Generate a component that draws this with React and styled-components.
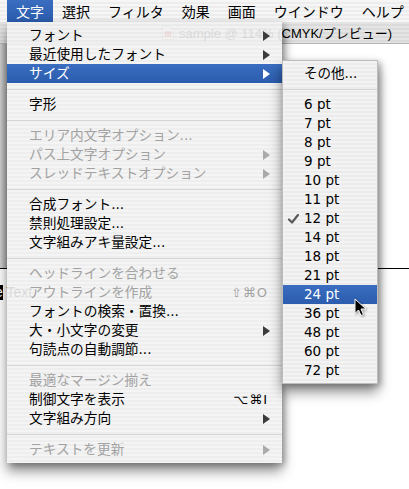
import React from 'react';
import styled, { createGlobalStyle } from 'styled-components';

const BLUE = 'linear-gradient(to bottom, #3b6dc0 0%, #3265b6 50%, #2c5cad 100%)';
const UI_FONT = '"DejaVu Sans", "Noto Sans CJK JP", sans-serif';
const JP_FONT = '"Noto Sans CJK JP", "DejaVu Sans", sans-serif';

const Global = createGlobalStyle`
  html, body { margin: 0; padding: 0; }
  body {
    width: 409px; height: 489px; overflow: hidden; background: #fff;
    font-family: ${UI_FONT};
  }
`;

const Screen = styled.div`
  position: relative;
  width: 409px;
  height: 489px;
  overflow: hidden;
  display: flex;
  flex-direction: column;
  background: #fff;
`;

const MenuBar = styled.div`
  flex: none;
  height: 22px;
  display: flex;
  padding-left: 7px;
  background: repeating-linear-gradient(to bottom, #f6f6f6 0 2px, #ededed 2px 4px);
  font-family: ${JP_FONT};
  font-size: 14px;
`;

const BarItem = styled.div`
  height: 22px;
  line-height: 22px;
  padding: 0 9px;
  white-space: nowrap;
  color: ${p => (p.$active ? '#fff' : '#000')};
  background: ${p => (p.$active ? BLUE : 'transparent')};
`;

const TitleBar = styled.div`
  flex: none;
  height: 21px;
  display: flex;
  align-items: center;
  gap: 5px;
  padding-left: 162px;
  background: repeating-linear-gradient(to bottom, #e4e4e4 0 2px, #dadada 2px 4px);
  border-bottom: 1px solid #b4b4b4;
  font-family: "Liberation Sans", "Noto Sans CJK JP", sans-serif;
  font-size: 13px;
  color: #000;
  white-space: nowrap;
`;

const Content = styled.div`
  flex: 1;
  display: flex;
  flex-direction: column;
`;

const Upper = styled.div`
  flex: none;
  height: 224px;
  display: flex;
`;

const Strip = styled.div`
  width: 7px;
  background: linear-gradient(to right, #d2d2d2, #a9a9a9);
`;

const Fill = styled.div`
  flex: 1;
  background: #fff;
`;

const Rule = styled.div`
  flex: none;
  height: 1px;
  display: flex;
`;

const RuleSeg = styled.div`
  width: ${p => p.$w}px;
  background: #000;
`;

const Spacer = styled.div`
  flex: 1;
`;

const Lower = styled.div`
  flex: 1;
  padding-top: 16px;
`;

const TextLine = styled.div`
  margin-left: -5px;
  height: 14px;
  line-height: 14px;
  font-family: "Liberation Sans", sans-serif;
  font-size: 14px;
  color: #000;
  white-space: nowrap;
`;

const Selected = styled.span`
  background: #000;
  color: #fff;
  display: inline-block;
  height: 15px;
`;

const Menu = styled.div`
  position: absolute;
  top: 22px;
  left: 7px;
  width: 275px;
  padding: 4px 0;
  z-index: 2;
  background: repeating-linear-gradient(
    to bottom,
    rgba(243, 243, 243, 0.9) 0 2px,
    rgba(236, 236, 236, 0.9) 2px 4px
  );
  box-shadow: 0 8px 12px rgba(0, 0, 0, 0.45), 3px 2px 6px rgba(0, 0, 0, 0.25);
`;

const SubMenu = styled.div`
  position: absolute;
  top: 60px;
  left: 282px;
  width: 94px;
  padding: 3px 0;
  z-index: 3;
  border: 1px solid #bcbcbc;
  background: repeating-linear-gradient(to bottom, #f3f3f3 0 2px, #ececec 2px 4px);
  box-shadow: 0 8px 12px rgba(0, 0, 0, 0.45), 3px 2px 6px rgba(0, 0, 0, 0.25);
`;

const Item = styled.div`
  height: 19px;
  display: flex;
  align-items: center;
  padding: ${p => (p.$sub ? '0 8px 0 5px' : '0 12px 0 22px')};
  font-size: ${p => (p.$sub ? '13.5px' : '13.7px')};
  color: ${p => (p.$disabled ? '#a2a2a2' : p.$active ? '#fff' : '#000')};
  background: ${p => (p.$active ? BLUE : 'transparent')};
`;

const Label = styled.span`
  flex: 1;
  line-height: 19px;
  white-space: nowrap;
`;

const CheckCol = styled.span`
  width: 16px;
  height: 19px;
  display: flex;
  align-items: center;
`;

const Shortcut = styled.span`
  margin-right: 2px;
  font-family: "DejaVu Sans", sans-serif;
  font-size: 13px;
  letter-spacing: 1px;
  line-height: 19px;
`;

const Arrow = styled.span`
  width: 0;
  height: 0;
  border-left: 7px solid ${p => (p.$disabled ? '#aaaaaa' : p.$active ? '#ffffff' : '#3c3c3c')};
  border-top: 5px solid transparent;
  border-bottom: 5px solid transparent;
`;

const Separator = styled.div`
  height: 12px;
  display: flex;
  align-items: center;
  &::after {
    content: '';
    flex: 1;
    height: 1px;
    background: #d6d6d6;
  }
`;

const Cursor = styled.svg`
  position: absolute;
  left: 354px;
  top: 298px;
  z-index: 5;
  filter: drop-shadow(1px 1px 1px rgba(0, 0, 0, 0.35));
`;

const mainItems = [
  { l: 'フォント', arrow: true },
  { l: '最近使用したフォント', arrow: true },
  { l: 'サイズ', arrow: true, active: true },
  'sep',
  { l: '字形' },
  'sep',
  { l: 'エリア内文字オプション...', dis: true },
  { l: 'パス上文字オプション', dis: true, arrow: true },
  { l: 'スレッドテキストオプション', dis: true, arrow: true },
  'sep',
  { l: '合成フォント...' },
  { l: '禁則処理設定...' },
  { l: '文字組みアキ量設定...' },
  'sep',
  { l: 'ヘッドラインを合わせる', dis: true },
  { l: 'アウトラインを作成', dis: true, sc: '⇧⌘O' },
  { l: 'フォントの検索・置換...' },
  { l: '大・小文字の変更', arrow: true },
  { l: '句読点の自動調節...' },
  'sep',
  { l: '最適なマージン揃え', dis: true },
  { l: '制御文字を表示', sc: '⌥⌘I' },
  { l: '文字組み方向', arrow: true },
  'sep',
  { l: 'テキストを更新', dis: true, arrow: true },
];

const sizes = ['6', '7', '8', '9', '10', '11', '12', '14', '18', '21', '24', '36', '48', '60', '72'];

const barItems = ['文字', '選択', 'フィルタ', '効果', '画面', 'ウインドウ', 'ヘルプ'];

function DocIcon() {
  return (
    <svg width="12" height="14" viewBox="0 0 12 14">
      <path d="M0.5 0.5 H8 L11.5 4 V13.5 H0.5 Z" fill="#fff" stroke="#999" />
      <rect x="2.5" y="5" width="7" height="6" fill="#d24040" />
    </svg>
  );
}

function Check() {
  return (
    <svg width="11" height="10" viewBox="0 0 11 10">
      <path d="M1 5.5 L4 8.5 L10 1" fill="none" stroke="#5a5a5a" strokeWidth="2.2" strokeLinecap="round" strokeLinejoin="round" />
    </svg>
  );
}

export default function App() {
  return (
    <>
      <Global />
      <Screen>
        <MenuBar>
          {barItems.map((b, i) => (
            <BarItem key={b} $active={i === 0}>{b}</BarItem>
          ))}
        </MenuBar>
        <TitleBar>
          <DocIcon />
          <span>sample @ 114% (CMYK/プレビュー)</span>
        </TitleBar>
        <Content>
          <Upper>
            <Strip />
            <Fill />
          </Upper>
          <Rule>
            <RuleSeg $w={7} />
            <Spacer />
            <RuleSeg $w={31} />
          </Rule>
          <Lower>
            <TextLine>
              <Selected>e</Selected>{'  '}Text
            </TextLine>
          </Lower>
        </Content>

        <Menu>
          {mainItems.map((it, i) =>
            it === 'sep' ? (
              <Separator key={i} />
            ) : (
              <Item key={i} $disabled={it.dis} $active={it.active}>
                <Label>{it.l}</Label>
                {it.sc && <Shortcut>{it.sc}</Shortcut>}
                {it.arrow && <Arrow $disabled={it.dis} $active={it.active} />}
              </Item>
            )
          )}
        </Menu>

        <SubMenu>
          <Item $sub>
            <CheckCol />
            <Label>その他...</Label>
          </Item>
          <Separator />
          {sizes.map(s => (
            <Item key={s} $sub $active={s === '24'}>
              <CheckCol>{s === '12' && <Check />}</CheckCol>
              <Label>{s} pt</Label>
            </Item>
          ))}
        </SubMenu>

        <Cursor width="14" height="20" viewBox="0 0 14 20">
          <path d="M1 1 L1 15.5 L4.5 12 L7 17.5 L9.5 16.5 L7 11 L12 11 Z" fill="#000" stroke="#fff" strokeWidth="1" strokeLinejoin="miter" />
        </Cursor>
      </Screen>
    </>
  );
}
